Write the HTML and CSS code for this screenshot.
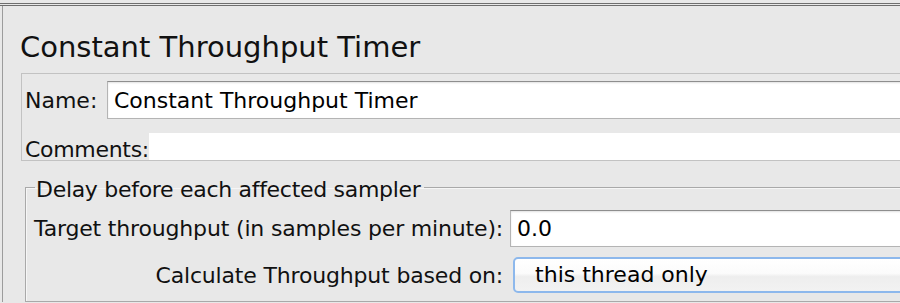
FILE: index.html
```html
<!DOCTYPE html>
<html lang="en">
<head>
    <meta charset="UTF-8">
    <meta name="viewport" content="width=device-width, initial-scale=1.0">
    <title>Constant Throughput Timer</title>
    <link rel="stylesheet" href="styles.css">
</head>
<body>
    <!-- window frame -->
    <div class="window">
        <div class="pane">
            <h1 class="title">Constant Throughput Timer</h1>

            <!-- name / comments -->
            <div class="name-panel">
                <div class="name-row">
                    <label class="name-label" for="name">Name:</label>
                    <input id="name" class="text-field" type="text" value="Constant Throughput Timer">
                </div>
                <div class="comments-row">
                    <label class="comments-label" for="comments">Comments:</label>
                    <input id="comments" class="comments-field" type="text" value="">
                </div>
            </div>

            <!-- timer settings -->
            <fieldset class="group">
                <legend>Delay before each affected sampler</legend>
                <div class="form-grid">
                    <label class="form-label" for="throughput">Target throughput (in samples per minute):</label>
                    <input id="throughput" class="text-field" type="text" value="0.0">
                    <label class="form-label">Calculate Throughput based on:</label>
                    <div class="combo">this thread only</div>
                </div>
            </fieldset>
        </div>
    </div>
</body>
</html>
```

FILE: styles.css
```css
body {
    margin: 0;
    padding: 0;
    background-color: #e8e8e8;
    font-family: "DejaVu Sans", sans-serif;
    font-size: 22px;
    color: #111;
    overflow: hidden;
}
/* window border */
.window {
    margin-top: 3px;
    border-top: 3px double #6e6e6e;
    width: 1100px;
}
.pane {
    margin-left: 2px;
    border-left: 1px solid #9c9c9c;
    padding-top: 24px;
}
.title {
    margin: 0 0 9px 17px;
    font-size: 29px;
    font-weight: normal;
    line-height: 34px;
}
/* name panel */
.name-panel {
    margin-left: 18px;
    border: 1px solid #c2c2c2;
    padding: 7px 0 0 3px;
}
.name-row {
    display: flex;
    align-items: center;
    height: 38px;
}
.name-label {
    width: 82px;
    flex: none;
}
.text-field {
    flex: 1;
    height: 38px;
    box-sizing: border-box;
    margin: 0;
    padding: 0 6px;
    font: inherit;
    color: #000;
    background: white;
    border: 1px solid #b4b4b4;
    border-top-color: #8e8e8e;
    box-shadow: inset 0 1px 2px rgba(0, 0, 0, 0.12);
    outline: none;
}
.comments-row {
    display: flex;
    margin-top: 14px;
    height: 27px;
}
.comments-label {
    align-self: flex-end;
    line-height: 21px;
    letter-spacing: -0.3px;
}
.comments-field {
    flex: 1;
    margin: 0;
    padding: 0;
    border: none;
    background: white;
    font: inherit;
    outline: none;
}
/* settings group */
.group {
    margin: 11px 0 0 22px;
    padding: 0 0 8px 8px;
    border: 1px solid #a9a9a9;
    box-shadow: inset 1px 1px 0 #f6f6f6;
}
.group legend {
    margin-left: 1px;
    padding: 5px 4px 0 1px;
    line-height: 26px;
    letter-spacing: -0.3px;
}
.form-grid {
    display: grid;
    grid-template-columns: auto 1fr;
    column-gap: 7px;
    row-gap: 10px;
    margin-top: 7px;
}
.form-label {
    justify-self: end;
    align-self: center;
    letter-spacing: -0.17px;
}
.form-grid .text-field {
    height: 37px;
}
.combo {
    margin-left: 3px;
    height: 36px;
    box-sizing: border-box;
    padding-left: 20px;
    line-height: 32px;
    color: #000;
    border: 2px solid #8db8ec;
    border-radius: 5px;
    background: linear-gradient(#ffffff 0%, #fbfbfb 45%, #eeeeee 55%, #f2f2f2 100%);
}
```
